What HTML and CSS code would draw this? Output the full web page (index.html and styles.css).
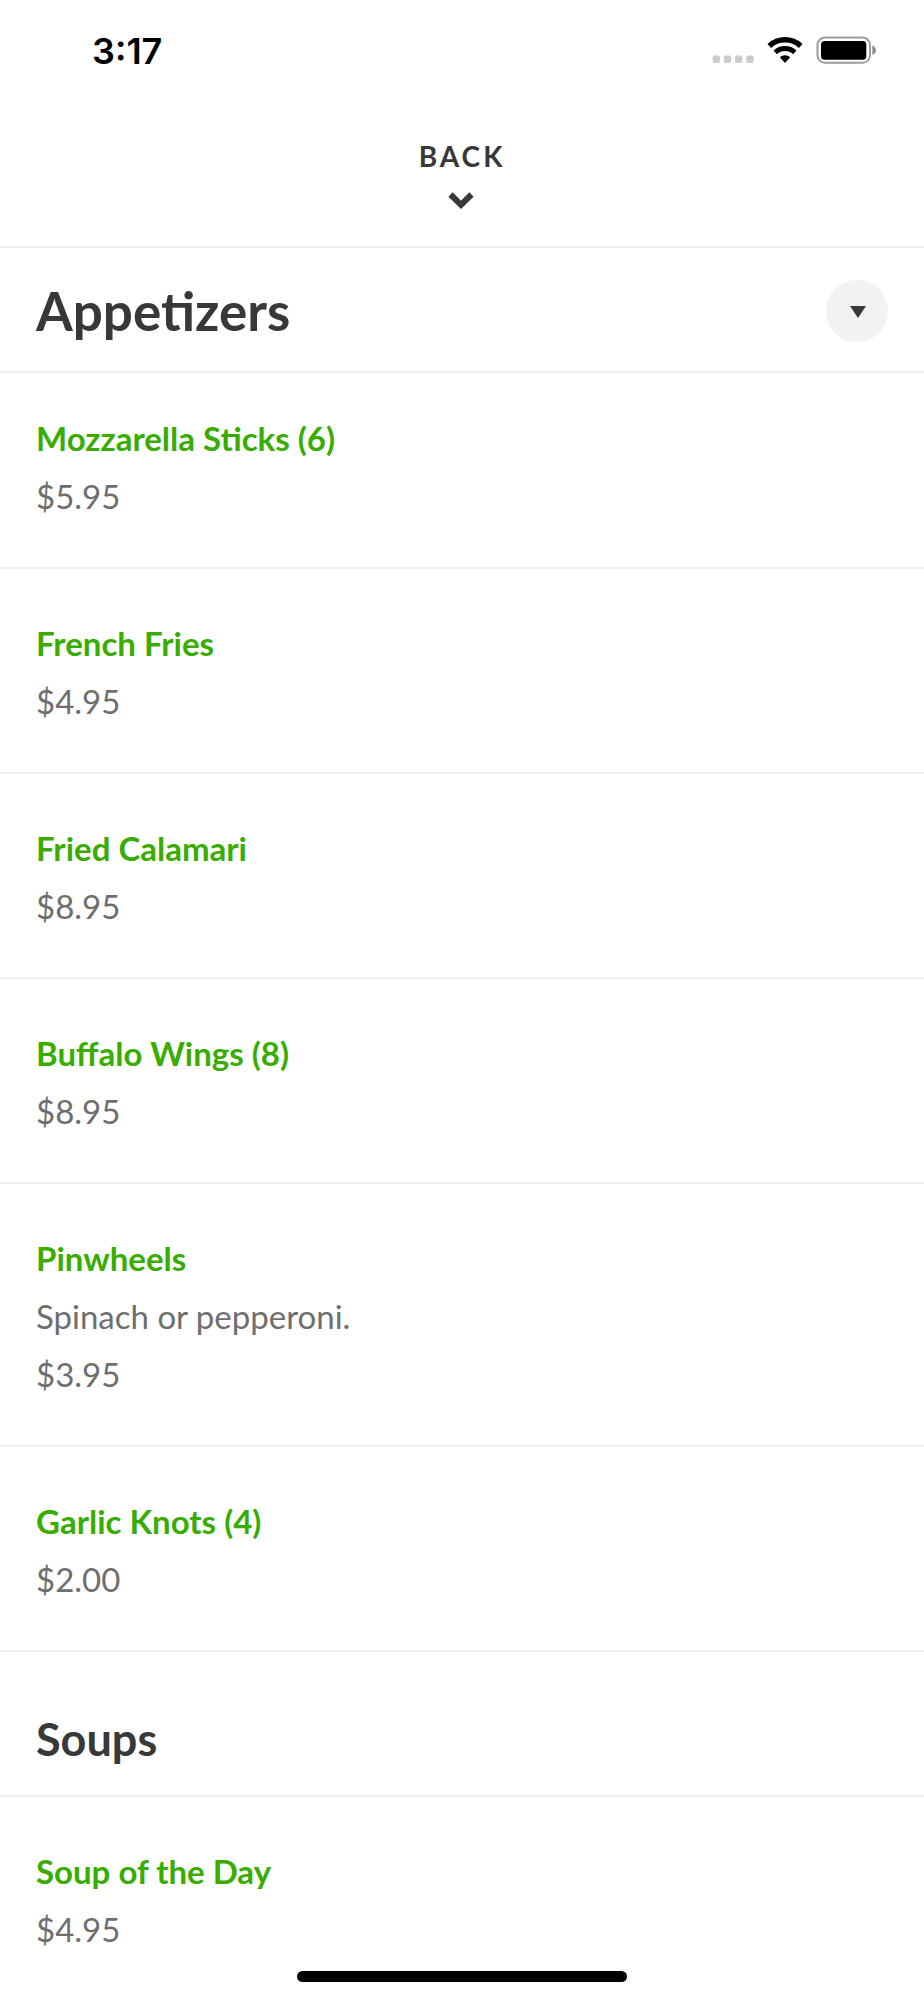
FILE: index.html
```html
<!DOCTYPE html>
<html lang="en">
<head>
<meta charset="utf-8">
<meta name="viewport" content="width=device-width, initial-scale=1">
<title>Menu</title>
<link rel="stylesheet" href="styles.css">
</head>
<body>
<div class="status">
  <span class="clock">3:17</span>
  <div class="indicators">
    <svg class="dots" width="42" height="8" viewBox="0 0 42 8" fill="#cbcbcb"><rect x=".6" y=".6" width="7.400" height="7.400" rx="2"/><rect x="11.800" y=".6" width="7.400" height="7.400" rx="2"/><rect x="23" y=".6" width="7.400" height="7.400" rx="2"/><rect x="34.200" y=".6" width="7.400" height="7.400" rx="2"/></svg>
    <svg width="36" height="26" viewBox="0 0 36 26" fill="none" stroke="#000"><path stroke-width="5.400" d="M2.300 8.900A23.200 23.200 0 0 1 33.700 8.900"/><path stroke-width="5" d="M8.200 15.300A14.500 14.500 0 0 1 27.800 15.300"/><path d="M18 26l-5.200-5.700A7.800 7.800 0 0 1 23.200 20.300z" fill="#000" stroke="none"/></svg>
    <svg width="60" height="28" viewBox="0 0 60 28"><rect x="1.500" y="1.500" width="52.500" height="25.300" rx="7.500" fill="none" stroke="#9c9c9c" stroke-width="2"/><rect x="5" y="5" width="45.300" height="18.800" rx="3.500"/><path d="M56.300 9.500c4.800 1.800 4.800 7.800 0 9.600z" fill="#8c8c8c"/></svg>
  </div>
</div>
<button class="back" type="button">BACK
  <svg class="chevron" width="26" height="18" viewBox="0 0 26 18" fill="none" stroke="#383838" stroke-width="6"><path d="M2.500 2.500L13 12.800 23.500 2.500"/></svg>
</button>
<header class="category">
  <h1>Appetizers</h1>
  <button class="toggle" type="button" aria-label="Choose category"><svg width="16" height="12" viewBox="0 0 16 12" fill="#383838"><path d="M0 0h16L8 12z"/></svg></button>
</header>
<main>
  <ul class="items">
    <li class="item first"><h3>Mozzarella Sticks (6)</h3><p>$5.95</p></li>
    <li class="item"><h3>French Fries</h3><p>$4.95</p></li>
    <li class="item"><h3>Fried Calamari</h3><p>$8.95</p></li>
    <li class="item"><h3>Buffalo Wings (8)</h3><p>$8.95</p></li>
    <li class="item"><h3>Pinwheels</h3><p>Spinach or pepperoni.</p><p>$3.95</p></li>
    <li class="item"><h3>Garlic Knots (4)</h3><p>$2.00</p></li>
  </ul>
  <h2 class="section">Soups</h2>
  <ul class="items">
    <li class="item"><h3>Soup of the Day</h3><p>$4.95</p></li>
  </ul>
</main>
<div class="home"></div>
</body>
</html>
```
FILE: styles.css
```css
* { box-sizing: border-box; }
body { margin: 0; background: #fff; color: #383838; font-family: Lato, "Open Sans", sans-serif; }
h1, h2, h3, p, ul { margin: 0; padding: 0; }
button { border: 0; padding: 0; color: inherit; font: inherit; cursor: pointer; }
svg { display: block; }
.status { display: flex; justify-content: space-between; height: 102px; padding: 0 48px 0 92px; }
.clock { padding-top: 29px; font: 600 36px/44px Inter, sans-serif; color: #000; }
.indicators { display: flex; align-items: center; gap: 13px; height: 100px; }
.dots { margin-top: 18px; }
.back { display: flex; flex-direction: column; align-items: center; gap: 18px; width: 100%; height: 146px; padding-top: 36px; border-bottom: 2px solid #efefef; background: none; font-size: 28px; line-height: 36px; font-weight: 700; letter-spacing: 3px; }
.chevron { margin-right: 3px; }
.category { display: flex; align-items: center; justify-content: space-between; padding: 31px 36px 28px; border-bottom: 2px solid #efefef; }
h1 { font-size: 53px; line-height: 64px; font-weight: 700; }
.toggle { display: grid; place-items: center; width: 62px; height: 62px; padding: 2px 0 0 2px; border-radius: 50%; background: #f2f2f2; }
.items { list-style: none; }
.item { padding: 45px 36px 42px; border-bottom: 2px solid #efefef; font-size: 33px; line-height: 58px; color: #6e6e6e; }
.item.first { padding-top: 36px; }
h3 { font-size: 33px; line-height: 58px; font-weight: 700; color: #38ad00; }
.section { padding: 56px 36px 25px; border-bottom: 2px solid #efefef; font-size: 45px; line-height: 62px; font-weight: 700; }
.home { position: fixed; bottom: 18px; left: 50%; width: 330px; height: 11px; margin-left: -165px; border-radius: 6px; background: #000; }
```
